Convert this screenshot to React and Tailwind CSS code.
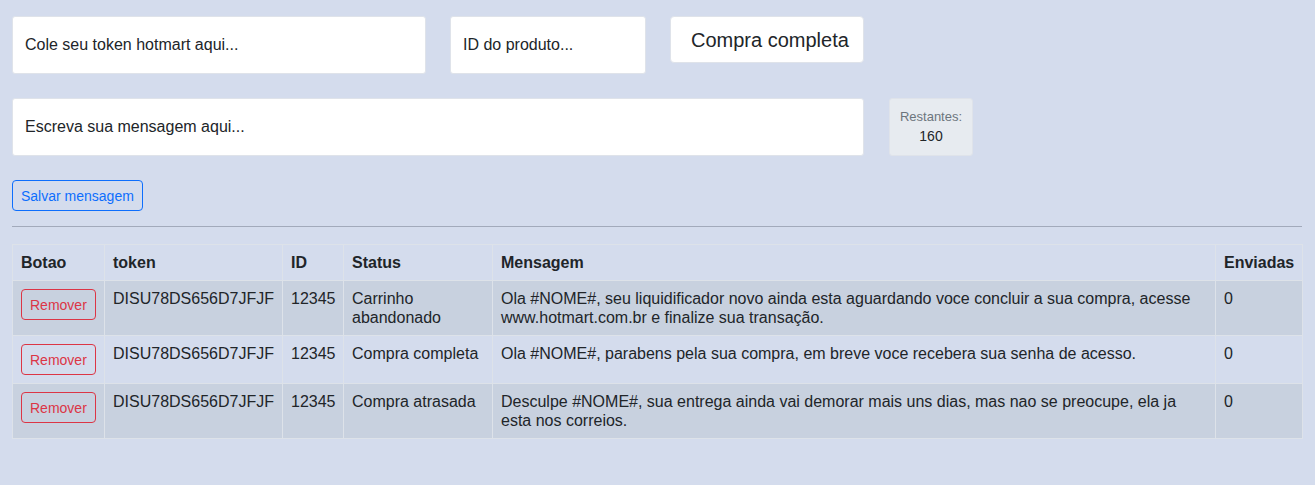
import React, { useState } from 'react';

const rows = [
  {
    token: 'DISU78DS656D7JFJF',
    id: '12345',
    status: 'Carrinho abandonado',
    msg: 'Ola #NOME#, seu liquidificador novo ainda esta aguardando voce concluir a sua compra, acesse www.hotmart.com.br e finalize sua transação.',
    sent: 0,
  },
  {
    token: 'DISU78DS656D7JFJF',
    id: '12345',
    status: 'Compra completa',
    msg: 'Ola #NOME#, parabens pela sua compra, em breve voce recebera sua senha de acesso.',
    sent: 0,
  },
  {
    token: 'DISU78DS656D7JFJF',
    id: '12345',
    status: 'Compra atrasada',
    msg: 'Desculpe #NOME#, sua entrega ainda vai demorar mais uns dias, mas nao se preocupe, ela ja esta nos correios.',
    sent: 0,
  },
];

const App = () => {
  const [message, setMessage] = useState('');
  const remaining = 160 - message.length;

  return (
    <div className="min-h-[485px] bg-[#d4dced] px-3 pt-4 text-[#212529] font-['Liberation_Sans',Arial,sans-serif]">
      <div className="flex items-start gap-6">
        <input
          type="text"
          placeholder="Cole seu token hotmart aqui..."
          className="w-[414px] h-[58px] px-3 bg-white border border-[#dfe3ea] rounded-[3px] text-base placeholder:text-[#212529] outline-none"
        />
        <input
          type="text"
          placeholder="ID do produto..."
          className="w-[196px] h-[58px] px-3 bg-white border border-[#dfe3ea] rounded-[3px] text-base placeholder:text-[#212529] outline-none"
        />
        <button className="w-[194px] h-[47px] pl-5 text-left bg-white border border-[#dfe3ea] rounded-[4px] text-[20px] text-[#212529]">
          Compra completa
        </button>
      </div>

      <div className="flex items-start gap-[25px] mt-[24px]">
        <input
          type="text"
          placeholder="Escreva sua mensagem aqui..."
          value={message}
          maxLength={160}
          onChange={(e) => setMessage(e.target.value)}
          className="w-[852px] h-[58px] px-3 bg-white border border-[#dfe3ea] rounded-[3px] text-base placeholder:text-[#212529] outline-none"
        />
        <div className="w-[84px] h-[58px] flex flex-col items-center justify-center bg-[#e7ebf0] border border-[#dfe3ea] rounded-[3px] leading-[18px]">
          <span className="text-[13px] text-[#6c757d]">Restantes:</span>
          <span className="text-sm">{remaining}</span>
        </div>
      </div>

      <button className="mt-[24px] h-[31px] px-2 border border-[#0d6efd] rounded-[4px] text-sm text-[#0d6efd]">
        Salvar mensagem
      </button>

      <hr className="mt-[15px] border-0 border-t border-[#a2aabb] w-[1290px]" />

      <table className="mt-[17px] w-[1290px] border-collapse text-base leading-[19px] table-fixed">
        <colgroup>
          <col className="w-[92px]" />
          <col className="w-[178px]" />
          <col className="w-[61px]" />
          <col className="w-[149px]" />
          <col className="w-[723px]" />
          <col className="w-[87px]" />
        </colgroup>
        <thead>
          <tr className="text-left">
            {['Botao', 'token', 'ID', 'Status', 'Mensagem', 'Enviadas'].map((h) => (
              <th key={h} className="border border-[#dde2e9] px-2 py-[8px] font-bold align-bottom">
                {h}
              </th>
            ))}
          </tr>
        </thead>
        <tbody>
          {rows.map((r, i) => (
            <tr key={i} className={i % 2 === 0 ? 'bg-[#c8d1df]' : 'bg-[#d4dced]'}>
              <td className="border border-[#dde2e9] px-2 py-2 align-top">
                <button className="h-[31px] px-2 border border-[#dc3545] rounded-[4px] text-sm text-[#dc3545] whitespace-nowrap">
                  Remover
                </button>
              </td>
              <td className="border border-[#dde2e9] px-2 py-2 align-top">{r.token}</td>
              <td className="border border-[#dde2e9] px-2 py-2 align-top">{r.id}</td>
              <td className="border border-[#dde2e9] px-2 py-2 align-top">{r.status}</td>
              <td className="border border-[#dde2e9] px-2 py-2 align-top">{r.msg}</td>
              <td className="border border-[#dde2e9] px-2 py-2 align-top">{r.sent}</td>
            </tr>
          ))}
        </tbody>
      </table>
    </div>
  );
};

export default App;
